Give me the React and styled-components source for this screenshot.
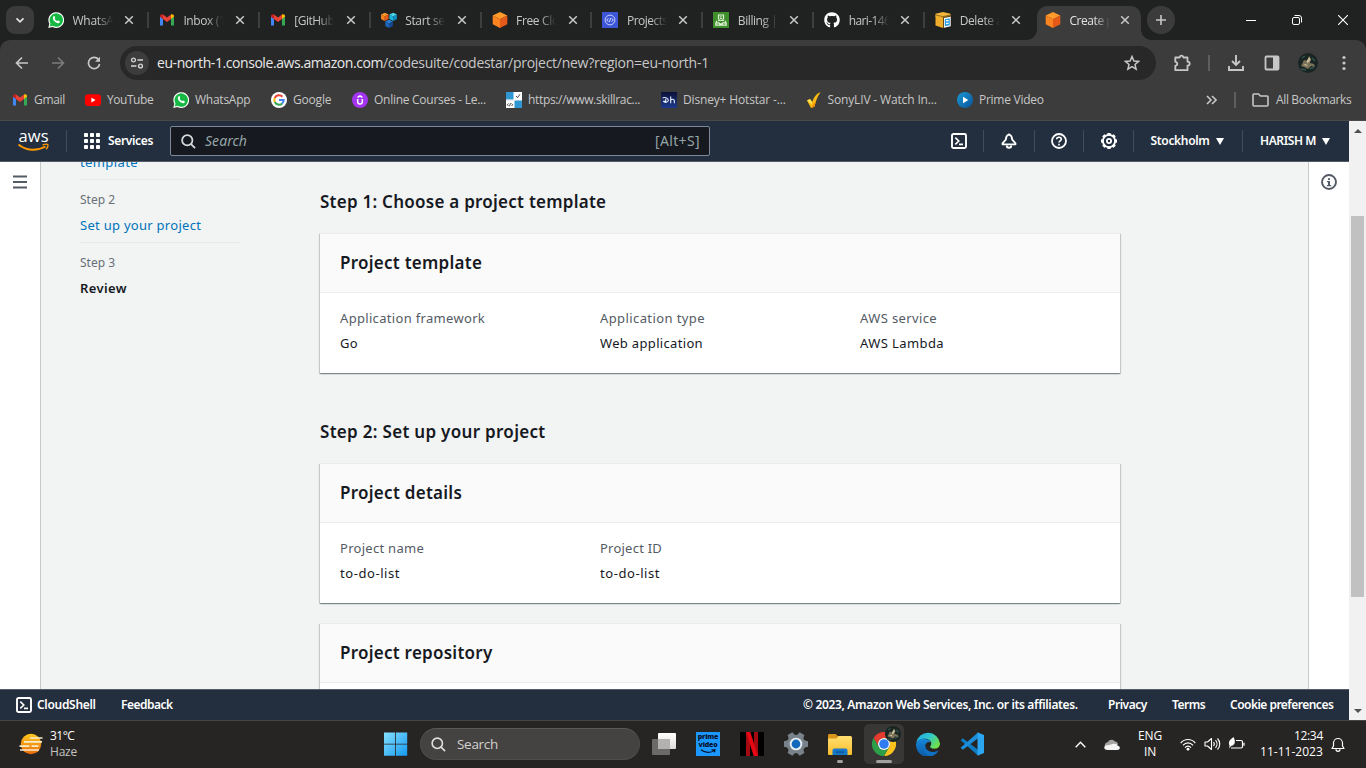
import React from "react";
import styled, { createGlobalStyle } from "styled-components";
import { FaGithub } from "react-icons/fa";

const Global = createGlobalStyle`
  * { box-sizing: border-box; }
  html, body, #root { margin: 0; padding: 0; height: 100%; }
  body { overflow: hidden; background: #202121; font-family: "Open Sans", "Noto Sans", sans-serif; }
  svg { display: block; flex: none; }
`;

const Text = styled.span`
  display: block;
  flex: none;
  width: ${(p) => (p.$w ? `${p.$w}px` : "auto")};
  line-height: ${(p) => p.$lh || 16}px;
  white-space: nowrap;
  font-size: ${(p) => p.$size || 12}px;
  font-weight: ${(p) => p.$weight || 400};
  font-style: ${(p) => (p.$italic ? "italic" : "normal")};
  letter-spacing: ${(p) => p.$ls || 0}px;
  color: ${(p) => p.$color || "inherit"};
`;
const AwsText = styled(Text)`
  font-family: "Noto Sans", "Open Sans", sans-serif;
`;
const AwsBold = styled(AwsText)`
  font-size: 12px;
  font-weight: 600;
`;

const Screen = styled.div`
  width: 1366px;
  height: 768px;
  display: flex;
  flex-direction: column;
  overflow: hidden;
`;

/* ---------- browser chrome ---------- */

const TabStrip = styled.div`
  height: 40px;
  flex: none;
  display: flex;
  align-items: flex-end;
  padding-left: 6px;
  background: #202121;
  color: #c7c7c7;
`;
const TabSearch = styled.div`
  width: 28px;
  height: 28px;
  margin: 0 4px 6px 0;
  border-radius: 9px;
  background: #3b3b3b;
  display: grid;
  place-items: center;
`;
const Tab = styled.div`
  position: relative;
  flex: none;
  width: ${(p) => (p.$active ? 104 : 110.9)}px;
  height: 34px;
  padding: 0 0 6px ${(p) => (p.$active ? 8 : 10)}px;
  margin-left: ${(p) => (p.$active ? 1 : 0)}px;
  display: flex;
  align-items: center;
  border-radius: 10px 10px 0 0;
  background: ${(p) => (p.$active ? "#3c3c3c" : "transparent")};
  color: ${(p) => (p.$active ? "#e3e3e3" : "#c7c7c7")};
  ${(p) =>
    p.$active &&
    `&::before, &::after {
      content: "";
      position: absolute;
      bottom: 0;
      width: 10px;
      height: 10px;
    }
    &::before { left: -10px; background: radial-gradient(circle at 0 0, transparent 9.5px, #3c3c3c 10px); }
    &::after { right: -10px; background: radial-gradient(circle at 100% 0, transparent 9.5px, #3c3c3c 10px); }`}
`;
const TabTitle = styled.div`
  width: 40px;
  margin: 2px ${(p) => (p.$active ? 9.5 : 10.5)}px 0 8.5px;
  mask-image: linear-gradient(90deg, #000 60%, transparent 100%);
`;
const TabRule = styled.i`
  width: 2px;
  height: 16px;
  margin-left: auto;
  background: #3d3e3e;
`;
const NewTab = styled.div`
  width: 28px;
  height: 28px;
  margin: 0 0 6px 6px;
  border-radius: 50%;
  background: #3b3b3b;
  display: grid;
  place-items: center;
`;
const WindowButtons = styled.div`
  margin-left: auto;
  height: 40px;
  display: flex;
`;
const WindowButton = styled.div`
  width: 46px;
  display: grid;
  place-items: center;
`;
const ToolbarBack = styled.div`
  flex: none;
  background: #202121;
`;
const Toolbar = styled.div`
  height: 46px;
  padding: 0 12px;
  display: flex;
  align-items: center;
  border-radius: 10px 10px 0 0;
  background: #3c3c3c;
  color: #c7c7c7;
`;
const NavButton = styled.div`
  width: 20px;
  height: 20px;
  margin-right: ${(p) => p.$gap || 0}px;
  display: grid;
  place-items: center;
`;
const AddressBar = styled.div`
  width: 1036px;
  height: 34px;
  margin-right: 16px;
  padding: 0 16px 0 5px;
  border-radius: 17px;
  background: #282828;
  display: flex;
  align-items: center;
`;
const SiteChip = styled.div`
  width: 24px;
  height: 24px;
  border-radius: 50%;
  background: #3c3c3c;
  display: grid;
  place-items: center;
  margin-right: 8px;
`;
const Push = styled.div`
  margin-left: auto;
`;
const Rule = styled.i`
  width: 2px;
  height: 16px;
  flex: none;
  margin-right: ${(p) => p.$gap}px;
  background: #5e5e5e;
`;
const Bookmarks = styled.div`
  height: 35px;
  flex: none;
  padding: 0 15px 6px 12px;
  display: flex;
  align-items: center;
  background: #3c3c3c;
  border-bottom: 1px solid #4a4a4a;
  color: #c7c7c7;
`;
const Bookmark = styled.div`
  display: flex;
  align-items: center;
  gap: 6px;
  margin-right: ${(p) => p.$gap}px;
`;
const BookmarksEnd = styled.div`
  margin-left: auto;
  display: flex;
  align-items: center;
`;

/* ---------- AWS console ---------- */

const Viewport = styled.div`
  height: 599px;
  flex: none;
  display: flex;
`;
const Console = styled.div`
  width: 1349px;
  display: flex;
  flex-direction: column;
`;
const AwsNav = styled.div`
  height: 41px;
  flex: none;
  display: flex;
  align-items: center;
  padding-left: 17px;
  background: #232f3e;
  border-bottom: 1px solid #545b64;
  color: #fff;
`;
const AwsRule = styled.i`
  width: 1px;
  height: 22px;
  flex: none;
  background: #414d5c;
`;
const Services = styled.div`
  display: flex;
  align-items: center;
  gap: 8px;
  margin: 0 17px;
`;
const Logo = styled.div`
  margin-right: 17px;
`;
const AwsSearch = styled.div`
  width: 540px;
  height: 30px;
  padding: 0 9px 0 10px;
  display: flex;
  align-items: center;
  gap: 9px;
  border: 1px solid #7d8998;
  border-radius: 2px;
  background: #16191f;
  color: #95a5a6;
`;
const NavCell = styled.div`
  width: ${(p) => p.$w}px;
  padding-right: ${(p) => p.$pr || 0}px;
  display: flex;
  align-items: center;
  justify-content: center;
  gap: 6px;
`;
const Body = styled.div`
  flex: 1;
  min-height: 0;
  display: flex;
  background: #f2f3f3;
  overflow: hidden;
`;
const Rail = styled.div`
  width: 41px;
  flex: none;
  background: #fff;
  padding: 12px 0 0 12px;
  margin-left: ${(p) => (p.$right ? "auto" : 0)};
  border-${(p) => (p.$right ? "left" : "right")}: 1px solid #c5cacb;
`;
const Steps = styled.div`
  width: 160px;
  margin: -10px 80px 0 39px;
`;
const Step = styled.div`
  padding: ${(p) => (p.$first ? 0 : 10)}px 0 7px;
  border-bottom: ${(p) => (p.$last ? "none" : "1px solid #e6e9e9")};
`;
const StepName = styled(AwsText)`
  margin-top: ${(p) => (p.$first ? 0 : 5)}px;
`;
const Main = styled.div`
  width: 800px;
  padding-top: 28px;
`;
const Heading = styled(AwsText)`
  margin-bottom: ${(p) => p.$mb || 0}px;
  font-size: 17px;
  font-weight: 600;
  line-height: 24px;
  color: #16191f;
`;
const Card = styled.section`
  margin-bottom: ${(p) => p.$gap || 0}px;
  background: #fff;
  border-top: 1px solid #eaeded;
  box-shadow: 0 1px 1px 0 rgba(0, 28, 36, 0.3), 1px 1px 1px 0 rgba(0, 28, 36, 0.15), -1px 1px 1px 0 rgba(0, 28, 36, 0.15);
`;
const CardHead = styled.header`
  height: 59px;
  padding: 17px 20px;
  background: #fafafa;
  border-bottom: 1px solid #eaeded;
`;
const CardBody = styled.div`
  height: 80px;
  padding: 15px 0 0 20px;
  display: flex;
`;
const FieldBox = styled.div`
  width: 260px;
  flex: none;
  display: flex;
  flex-direction: column;
  gap: 5px;
`;
const Footer = styled.footer`
  height: 31px;
  flex: none;
  padding: 0 16px;
  display: flex;
  align-items: center;
  background: #232f3e;
  border-top: 1px solid #545b64;
  color: #fff;
`;
const FooterGroup = styled.div`
  display: flex;
  align-items: center;
  gap: ${(p) => p.$gap}px;
  margin-right: ${(p) => p.$mr || 0}px;
`;
const Scrollbar = styled.div`
  width: 17px;
  background: #f1f1f1;
  display: flex;
  flex-direction: column;
  align-items: center;
  padding: 8px 0 7px;
`;
const Thumb = styled.div`
  width: 13px;
  height: 381px;
  margin: 83px 0 auto;
  background: #c1c1c1;
`;

/* ---------- taskbar ---------- */

const Taskbar = styled.div`
  height: 48px;
  flex: none;
  display: flex;
  align-items: center;
  padding-bottom: 1px;
  background: #272523;
  border-top: 1px solid #484644;
  color: #fff;
`;
const Weather = styled.div`
  width: 374px;
  padding-left: 19px;
  display: flex;
  align-items: center;
  gap: 7px;
`;
const Stack = styled.div`
  display: flex;
  flex-direction: column;
  align-items: ${(p) => p.$align || "flex-start"};
  margin-right: ${(p) => p.$mr || 0}px;
`;
const TaskSearch = styled.div`
  width: 220px;
  height: 32px;
  margin: 0 2px;
  padding-left: 10px;
  display: flex;
  align-items: center;
  gap: 11px;
  border-radius: 16px;
  border: 1px solid #4e4c4b;
  border-top-color: #5a5857;
  background: #454341;
  color: #d2d1d0;
`;
const AppSlot = styled.div`
  position: relative;
  width: 40px;
  height: 40px;
  margin: 0 2px;
  border-radius: 5px;
  display: grid;
  place-items: center;
  background: ${(p) => (p.$active ? "#393735" : "transparent")};
  ${(p) =>
    p.$bar &&
    `&::after {
      content: "";
      position: absolute;
      left: ${20 - p.$bar / 2}px;
      bottom: 1px;
      width: ${p.$bar}px;
      height: 3px;
      border-radius: 2px;
      background: #a3a2a1;
    }`}
`;
const Badge = styled.div`
  position: absolute;
  left: 21px;
  top: 2px;
`;
const PrimeTile = styled.div`
  width: 24px;
  height: 24px;
  display: flex;
  flex-direction: column;
  align-items: center;
  padding-top: 1px;
  background: #1a98ff;
  color: #06122b;
  font-family: "Open Sans", sans-serif;
  font-size: 7px;
  font-weight: 800;
  line-height: 8px;
  letter-spacing: -0.2px;
`;
const Tray = styled.div`
  margin-left: auto;
  padding-right: 21px;
  display: flex;
  align-items: center;
`;
const TrayIcon = styled.div`
  margin-right: ${(p) => p.$mr || 0}px;
`;

/* ---------- icons ---------- */

const Svg = ({ s = 16, h, vb, children }) => (
  <svg width={s} height={h || s} viewBox={vb || `0 0 ${s} ${h || s}`} fill="none">
    {children}
  </svg>
);
const Gmail = () => (
  <Svg>
    <path d="M1 13.500h3V6.800L1 4.500z" fill="#4285f4" />
    <path d="M12 13.500h3v-9l-3 2.300z" fill="#34a853" />
    <path d="M4 2.600 8 5.600l4-3v4.500L8 10 4 7.100z" fill="#ea4335" />
    <path d="M4 2.600v4.500L1 4.800v-.6C1 2.500 2.800 1.800 4 2.600z" fill="#c5221f" />
    <path d="M12 2.600v4.500l3-2.300v-.6c0-1.700-1.800-2.400-3-1.600z" fill="#fbbc04" />
  </Svg>
);
const WhatsApp = () => (
  <Svg>
    <path d="M0.300 16 1.300 11.800A7.900 7.900 0 1 1 4.500 15z" fill="#fff" />
    <path d="M1.700 14.600 2.500 11.500A6.700 6.700 0 1 1 4.800 13.800z" fill="#15b843" />
    <path d="M5.600 4.200c.5-.3.9-.2 1.100.3l.5 1.200c.1.400-.6.800-.5 1.100.5 1.100 1.300 1.800 2.400 2.300.4.200.8-.8 1.100-.6l1.400.7c.5.300.1 1.500-.6 1.800-1.300.6-3.300-.4-4.600-1.700C5 8 4.200 5.500 5.600 4.200z" fill="#fff" />
  </Svg>
);
const Cube = ({ x = 0, y = 0, k = 1, c }) => (
  <g transform={`translate(${x} ${y}) scale(${k})`}>
    <path d="M8 0 15.300 3.500 8 7.200.7 3.500z" fill={c[0]} />
    <path d="M.7 3.500 8 7.200V16L.7 12.200z" fill={c[1]} />
    <path d="M15.300 3.500 8 7.200V16l7.300-3.800z" fill={c[2]} />
  </g>
);
const orange = ["#ff9a2b", "#fb8320", "#e55a18"];
const AwsCube = () => <Svg><Cube c={orange} /></Svg>;
const Cubes = () => (
  <Svg>
    <Cube k={0.52} y={0.7} x={-0.4} c={orange} />
    <Cube k={0.52} y={0.7} x={8} c={["#4dd8e8", "#21b5d8", "#0d8fc0"]} />
    <Cube k={0.52} y={7.7} x={3.9} c={["#2d7fd6", "#1c64b8", "#134a94"]} />
  </Svg>
);
const CodeStar = () => (
  <Svg>
    <rect width="16" height="16" fill="#3d55d8" />
    <circle cx="8" cy="8" r="4.900" stroke="#c9d2ff" strokeWidth="1" />
    <path d="M6.300 6.300 4.800 8l1.500 1.700M9.700 6.300 11.200 8 9.700 9.700M8.600 6 7.400 10" stroke="#e4e9ff" strokeWidth=".9" />
  </Svg>
);
const Billing = () => (
  <Svg>
    <rect width="16" height="16" fill="#3f8f2c" />
    <path d="M5.500 7.500V3h5v4.500M7.200 5.300 8.500 4.500M5 8.500h2M9 8.500h2M3.500 8.800v2h2.500l.8 1h2.400l.8-1h2.500v-2M2.800 10.500v2.700h10.400v-2.700" stroke="#e2f3d8" strokeWidth="1.200" />
    <circle cx="8" cy="7.500" r="1.200" stroke="#e2f3d8" strokeWidth=".9" />
  </Svg>
);
const Bucket = () => (
  <Svg>
    <path d="M8 0 15.500 1.800v3L8 6.500.5 4.800v-3z" fill="#f3b73e" />
    <path d="M.5 3.300 8 5V16L.5 13.500z" fill="#f0ac2c" />
    <path d="M.5 2.900 8 4.600l7.500-1.700" stroke="#6b4a12" strokeWidth=".7" />
    <path d="M15.500 3.300 8 5V16l7.500-2.500z" fill="#6b4a12" />
    <path d="M9 6 15.700 4.700v9.600L9 15.700z" fill="#fff" />
    <path d="M9.800 7.200l5-.9v7l-5 1z" fill="#2c9de0" />
    <path d="M11 8.900l2.600-.5M11 11.600l2.600-.5" stroke="#fff" strokeWidth="1.200" />
  </Svg>
);
const Close = () => (
  <Svg s={12}><path d="M2.200 2.200l7.600 7.600M9.800 2.200 2.200 9.800" stroke="#c9c9c9" strokeWidth="1.500" /></Svg>
);
const YouTube = () => (
  <Svg>
    <rect x="0" y="2.300" width="16" height="11.600" rx="3" fill="#f00" />
    <path d="M6.400 5.700v4.800L10.600 8.100z" fill="#fff" />
  </Svg>
);
const Google = () => (
  <Svg>
    <circle cx="8" cy="8" r="8" fill="#fff" />
    <path d="M3.700 6.100A4.700 4.700 0 0 1 11.400 4.700" stroke="#ea4335" strokeWidth="2" />
    <path d="M3.800 10A4.700 4.700 0 0 1 3.800 6" stroke="#fbbc05" strokeWidth="2" />
    <path d="M11.200 11.400A4.700 4.700 0 0 1 3.800 10" stroke="#34a853" strokeWidth="2" />
    <path d="M8 8h4.700A4.700 4.700 0 0 1 11.100 11.500" stroke="#4285f4" strokeWidth="2" />
  </Svg>
);
const Udemy = () => (
  <Svg>
    <circle cx="8" cy="8" r="8" fill="#a435f0" />
    <path d="M5.700 7v2.700c0 3 4.600 3 4.600 0V7M5.600 5.300 8 3.800l2.400 1.500" stroke="#fff" strokeWidth="1.500" />
  </Svg>
);
const Skill = () => (
  <Svg>
    <rect width="16" height="16" fill="#fff" />
    <path d="M0 0h7.500v7.500H0zM8.500 8.500H16V16H8.500z" fill="#2f97d1" />
    <path d="M0 7.800h7.500v.7H0z" fill="#d5d5d5" />
    <path d="M10 4l1.500 1.700L14 2.200M2.500 11.500 1.300 12.800l1.200 1.200M5.500 11.500l1.200 1.300-1.200 1.200M4.500 11.200 3.500 14.200" stroke="#333" strokeWidth=".9" />
  </Svg>
);
const Hotstar = () => (
  <Svg>
    <defs><linearGradient id="hs" x1="0" y1="0" x2="0" y2="1"><stop stopColor="#0b1038" /><stop offset="1" stopColor="#1d3b8e" /></linearGradient></defs>
    <rect width="16" height="16" fill="url(#hs)" />
    <path d="M1.500 6C4.500 4.800 7.300 6.200 7.300 8.300S3.500 11 2.500 9.300h2M4.700 7v4M9.700 4.500v6.800M9.700 8.800c.2-2 3.600-2 3.600 0v2.500" stroke="#e8f1ff" strokeWidth="1.100" />
  </Svg>
);
const Sony = () => (
  <Svg>
    <path d="M1 8.500 4 7l2.200 3C8 5 10.500 1.500 14.500.3c-3 4.200-4.800 9-6 14.500L5 16z" fill="#fdb913" />
    <path d="M1 8.500 4 7l2.200 3-.6 2.500z" fill="#ffe14a" />
    <path d="M5 16l3.500-1.200L10 9z" fill="#f08a00" />
  </Svg>
);
const Prime = () => (
  <Svg>
    <defs><linearGradient id="pv" x1="0" y1="0" x2="1" y2="1"><stop stopColor="#1a9bd8" /><stop offset="1" stopColor="#0b5296" /></linearGradient></defs>
    <circle cx="8" cy="8" r="8" fill="url(#pv)" />
    <path d="M6 4.800v6.400L11.300 8z" fill="#fff" />
  </Svg>
);
const Avatar = ({ s }) => (
  <Svg s={s} vb="0 0 20 20">
    <circle cx="10" cy="10" r="10" fill="#182523" />
    <path d="M3 13 6 7l3 1 2-5 2 3-1 4 4 1 1 3-4-1-3 3-4-2z" fill="#7a7258" />
    <path d="M8.500 8l3-4 1 3-3 3.500zM5 12l3-1 2 2M12 11l3 1" fill="#c9be9b" />
    <path d="M4 5l3-2M14 5l3 3M3 16l5 1M12 16l4-2" stroke="#35524a" strokeWidth="1.500" />
  </Svg>
);
const Shell = () => (
  <Svg>
    <rect x="1" y="1" width="14" height="14" rx="1.500" stroke="#fff" strokeWidth="1.900" />
    <path d="M4.300 4.600 7.800 8l-3.500 3.400M8 11.400h4" stroke="#fff" strokeWidth="1.600" />
  </Svg>
);
const Caret = () => <Svg s={8} h={7}><path d="M0 0h8L4 7z" fill="#fff" /></Svg>;
const Magnifier = ({ s, color, w }) => (
  <Svg s={s} vb="0 0 16 16">
    <circle cx="6.700" cy="6.700" r="5.500" stroke={color} strokeWidth={w} />
    <path d="M10.500 10.500 15 15" stroke={color} strokeWidth={w} />
  </Svg>
);
const AwsLogo = () => (
  <Svg s={32} h={22}>
    <text x="1.500" y="12" fontFamily="Open Sans" fontWeight="500" fontSize="16.500" textLength="30" lengthAdjust="spacing" fill="#fff">aws</text>
    <path d="M1.500 14.500C9 21 20 21.300 28.500 16.500" stroke="#ff9900" strokeWidth="1.900" />
    <path d="M25.500 15.200c2-.9 4.800-1.200 5.300-.5s-.3 3.300-1.800 4.600" stroke="#ff9900" strokeWidth="1.400" />
  </Svg>
);
const Grid = () => (
  <Svg>
    {[0, 6, 12].map((y) => [0, 6, 12].map((x) => <rect key={`${x}-${y}`} x={x} y={y} width="4" height="4" rx=".8" fill="#fff" />))}
  </Svg>
);
const AwsBell = () => (
  <Svg>
    <path d="M8 1.300c2 .9 3.100 2.700 3.200 5.400l3.300 3.700v.9h-13v-.9l3.300-3.700C4.900 4 6 2.200 8 1.300z" stroke="#fff" strokeWidth="1.800" strokeLinejoin="round" />
    <path d="M5.800 12.500a2.200 2.200 0 0 0 4.400 0" stroke="#fff" strokeWidth="2" />
  </Svg>
);
const Help = () => (
  <Svg>
    <circle cx="8" cy="8" r="7" stroke="#fff" strokeWidth="1.800" />
    <path d="M5.700 6.300C5.700 3.500 10.300 3.600 10.300 6.200 10.300 7.900 8 7.900 8 9.600M8 10.800v1.700" stroke="#fff" strokeWidth="1.600" />
  </Svg>
);
const AwsGear = () => (
  <Svg>
    <circle cx="8" cy="8" r="6.100" stroke="#fff" strokeWidth="1.800" />
    {[0, 45, 90, 135, 180, 225, 270, 315].map((a) => <rect key={a} x="6.300" y="0" width="3.400" height="2.600" rx=".6" fill="#fff" transform={`rotate(${a} 8 8)`} />)}
    <circle cx="8" cy="8" r="2.100" stroke="#fff" strokeWidth="1.800" />
  </Svg>
);
const InfoIcon = () => (
  <Svg>
    <circle cx="8" cy="8" r="7" stroke="#545b64" strokeWidth="1.900" />
    <path d="M7 4.200h2v1.700H7zM6 7h3v4h1.200v1.300H5.900V11H7V8.300H6z" fill="#545b64" />
  </Svg>
);

const WeatherIcon = () => (
  <Svg s={24} h={22}>
    <defs><linearGradient id="sun" x1="0" y1="0" x2="0" y2="1"><stop stopColor="#ffc81e" /><stop offset="1" stopColor="#ec6a0c" /></linearGradient></defs>
    <circle cx="12" cy="11" r="10.200" fill="url(#sun)" />
    <path d="M11 5h12.500M5 8.800h18M.5 13.200h10M12.500 13.200h7M1 17h19" stroke="#f7eccb" strokeWidth="1.700" />
  </Svg>
);
const Start = () => (
  <Svg s={24}>
    <defs><linearGradient id="win" x1="0" y1="0" x2="1" y2="1"><stop stopColor="#86e0ff" /><stop offset="1" stopColor="#1499ef" /></linearGradient></defs>
    <path d="M0 .5h11.200v11.200H0zM12 .5h11.200v11.200H12zM0 12.500h11.200v11.200H0zM12 12.500h11.200v11.200H12z" fill="url(#win)" />
  </Svg>
);
const TaskView = () => (
  <Svg s={24}>
    <defs><linearGradient id="tv" x1="0" y1="0" x2="0" y2="1"><stop stopColor="#fff" /><stop offset="1" stopColor="#dcdcdc" /></linearGradient></defs>
    <rect x="0" y="7" width="18" height="16" rx="1" fill="#6b6a69" />
    <rect x="6" y="1" width="18" height="16" rx="1" fill="url(#tv)" />
    <rect x="6" y="7" width="12" height="10" fill="#b3b2b1" />
  </Svg>
);
const Netflix = () => (
  <Svg s={24}>
    <rect width="24" height="24" fill="#000" />
    <path d="M6 0h4v24l-4 .1zM14 0h4v24h-4z" fill="#a30a12" />
    <path d="M6 0h4.300L18 24h-4.300z" fill="#e50914" />
  </Svg>
);
const SettingsIcon = () => (
  <Svg s={24}>
    <circle cx="12" cy="12" r="9.300" fill="#79828a" />
    {[30, 90, 150, 210, 270, 330].map((a) => <path key={a} d="M8.300 4 9.300 0h5.400l1 4z" fill="#79828a" transform={`rotate(${a} 12 12)`} />)}
    <circle cx="12" cy="12" r="6.300" fill="#e9eef2" />
    <circle cx="12" cy="12" r="4.400" fill="#1268bb" />
  </Svg>
);
const Explorer = () => (
  <Svg s={24}>
    <defs><linearGradient id="ex" x1="0" y1="0" x2="0" y2="1"><stop stopColor="#ffdf70" /><stop offset="1" stopColor="#f9bd2c" /></linearGradient></defs>
    <path d="M0 3.500C0 2.500.6 2 1.500 2h6l3 2.500H22V9H0z" fill="#d9941a" />
    <path d="M0 6.500h8.500L10.500 4H22.500Q24 4 24 5.500V22q0 1-1 1H1q-1 0-1-1z" fill="url(#ex)" />
    <path d="M4.500 23v-4.500q0-2 2-2h11q2 0 2 2V23z" fill="#1478c8" />
    <path d="M8 19.500h8v1.200H8z" fill="#0b4f8c" />
  </Svg>
);
const Chrome = () => (
  <Svg s={24}>
    <path d="M1.600 6A12 12 0 0 1 22.400 6H12A6 6 0 0 0 6.800 15z" fill="#e33b2e" />
    <path d="M22.400 6A12 12 0 0 1 12 24L17.200 15A6 6 0 0 0 12 6z" fill="#fcc31e" />
    <path d="M12 24A12 12 0 0 1 1.600 6L6.800 15A6 6 0 0 0 17.200 15z" fill="#2c9f48" />
    <circle cx="12" cy="12" r="6" fill="#fff" />
    <circle cx="12" cy="12" r="4.800" fill="#2f7cf0" />
  </Svg>
);
const Edge = () => (
  <Svg s={24}>
    <defs>
      <linearGradient id="e1" x1="0" y1="0" x2="1" y2=".6"><stop stopColor="#1fa6e0" /><stop offset=".5" stopColor="#2fc6d0" /><stop offset="1" stopColor="#6fe04a" /></linearGradient>
      <linearGradient id="e2" x1="0" y1="0" x2="0" y2="1"><stop stopColor="#1489dc" /><stop offset="1" stopColor="#0c59a4" /></linearGradient>
    </defs>
    <path d="M.2 11A12 12 0 0 1 24 11.500c0 3.500-2.800 5.200-5.600 5.200-2.600 0-4.200-1.100-4.200-2 0-.8 1.100-1.200 1.100-3.100C15.300 8.500 12 6.800 8.800 6.800 4.500 6.800 1 9 .2 11z" fill="url(#e1)" />
    <path d="M.1 11.500C.8 8 4.500 6.500 8 6.700c3.500.2 6 1.800 6.800 3.500-1.500-.8-5.600-.2-5.600 3.800 0 4.600 4.800 7 9.300 6 1.800-.4 3.400-1.300 4-1.200A12 12 0 0 1 .1 11.500z" fill="url(#e2)" />
    <path d="M8.900 12.500C6 16 8 22.500 13.800 24a12 12 0 0 0 8.600-5.200c-5 2.700-12.600.7-13.200-4.600z" fill="#1170c2" />
  </Svg>
);
const VsCode = () => (
  <Svg s={24}>
    <path d="M.6 8.200 2.800 6.300 18 17.800V23.500z" fill="#0f7cc4" />
    <path d="M.6 15.800 2.800 17.700 18 6.200V.5z" fill="#1b8fdb" />
    <path d="M17.500.3 24 3v18l-6.500 2.700z" fill="#2aa6f2" />
  </Svg>
);

/* ---------- data ---------- */

const GitHub = () => <FaGithub size={16} color="#fff" />;
const tabs = [
  [WhatsApp, "WhatsA", -0.25],
  [Gmail, "Inbox (1", -0.4],
  [Gmail, "[GitHub", -0.5],
  [Cubes, "Start sel", -0.35],
  [AwsCube, "Free Clo", -0.35],
  [CodeStar, "Projects", -0.5],
  [Billing, "Billing |", -0.42],
  [GitHub, "hari-146", -0.6],
  [Bucket, "Delete a", -0.35],
];
const bookmarks = [
  [Gmail, "Gmail", 31, -0.3, 20],
  [YouTube, "YouTube", 46, -0.45, 20],
  [WhatsApp, "WhatsApp", 56, -0.25, 20],
  [Google, "Google", 39, -0.2, 20],
  [Udemy, "Online Courses - Le...", 112, -0.27, 20],
  [Skill, "https://www.skillrac...", 112, -0.34, 21],
  [Hotstar, "Disney+ Hotstar -...", 103, -0.16, 19.5],
  [Sony, "SonyLIV - Watch In...", 110, -0.15, 19.5],
  [Prime, "Prime Video", 65, -0.26, 0],
];

const Field = ({ label, value, l, v }) => (
  <FieldBox>
    <AwsText $lh={20} $size={13} $ls={l} $color="#545b64">{label}</AwsText>
    <AwsText $lh={20} $size={13} $ls={v} $color="#16191f">{value}</AwsText>
  </FieldBox>
);

export default function App() {
  return (
    <>
      <Global />
      <Screen>
        <TabStrip>
          <TabSearch><Svg s={10}><path d="M1.500 3.300 5 6.800l3.500-3.500" stroke="#e3e3e3" strokeWidth="1.700" /></Svg></TabSearch>
          {tabs.map(([Icon, title, ls], i) => (
            <Tab key={title}>
              <Icon />
              <TabTitle><Text $ls={ls}>{title}</Text></TabTitle>
              <Close />
              {i < tabs.length - 1 && <TabRule />}
            </Tab>
          ))}
          <Tab $active>
            <AwsCube />
            <TabTitle $active><Text $ls={-0.45}>Create p</Text></TabTitle>
            <Close />
          </Tab>
          <NewTab><Svg s={12}><path d="M6 1v10M1 6h10" stroke="#c7c7c7" strokeWidth="1.600" /></Svg></NewTab>
          <WindowButtons>
            <WindowButton><Svg s={10}><path d="M0 5.500h10" stroke="#fff" /></Svg></WindowButton>
            <WindowButton><Svg s={10}><rect x=".5" y="2.500" width="7" height="7" rx="1.500" stroke="#fff" /><path d="M2.500.5H7A2.500 2.500 0 0 1 9.500 3v4.500" stroke="#fff" /></Svg></WindowButton>
            <WindowButton><Svg s={10}><path d="M0 0l10 10M10 0 0 10" stroke="#fff" strokeWidth="1.100" /></Svg></WindowButton>
          </WindowButtons>
        </TabStrip>

        <ToolbarBack>
          <Toolbar>
            <NavButton $gap={16}><Svg s={14}><path d="M13 7H2M7 1.500 1.500 7 7 12.500" stroke="#c7c7c7" strokeWidth="1.700" /></Svg></NavButton>
            <NavButton $gap={16}><Svg s={14}><path d="M1 7h11M7 1.500 12.500 7 7 12.500" stroke="#7c7c7c" strokeWidth="1.600" /></Svg></NavButton>
            <NavButton $gap={16}><Svg s={14}><path d="M11.800 4A5.600 5.600 0 1 0 12.600 8" stroke="#c7c7c7" strokeWidth="1.700" /><path d="M13 .8v5H8z" fill="#c7c7c7" /></Svg></NavButton>
            <AddressBar>
              <SiteChip>
                <Svg s={14} h={12}>
                  <circle cx="3.500" cy="3" r="1.900" stroke="#d6d6d6" strokeWidth="1.400" />
                  <path d="M7.500 3H13M1 9h5.500" stroke="#d6d6d6" strokeWidth="1.500" />
                  <circle cx="10.500" cy="9" r="1.900" stroke="#d6d6d6" strokeWidth="1.400" />
                </Svg>
              </SiteChip>
              <Text $w={226} $size={14} $ls={-0.43} $color="#e8e8e8">eu-north-1.console.aws.amazon.com</Text>
              <Text $w={326} $size={14} $ls={-0.27}>/codesuite/codestar/project/new?region=eu-north-1</Text>
              <Push>
                <Svg><path d="M8 1.500 9.900 6l4.700.4-3.600 3.100 1.100 4.700L8 11.700l-4.100 2.500L5 9.500 1.400 6.400 6.100 6z" stroke="#c7c7c7" strokeWidth="1.500" /></Svg>
              </Push>
            </AddressBar>
            <NavButton $gap={16}><Svg s={18}><path d="M2.300 3.500h4.400c.2-2.500 3.400-2.500 3.600 0h4.200v4.200c2.900.3 2.900 3.600 0 3.900v4.600H2.300v-4.400c2.700-.4 2.700-3.600 0-4z" stroke="#c7c7c7" strokeWidth="1.800" strokeLinejoin="round" /></Svg></NavButton>
            <Rule $gap={16} />
            <NavButton $gap={16}><Svg><path d="M8 0v10M4 6l4 4 4-4M1 11v4h14v-4" stroke="#c7c7c7" strokeWidth="1.900" /></Svg></NavButton>
            <NavButton $gap={16}><Svg><rect x="1.500" y="1.500" width="13" height="13" rx="1" stroke="#c7c7c7" strokeWidth="1.800" /><path d="M9 1h5v14H9z" fill="#c7c7c7" /></Svg></NavButton>
            <NavButton $gap={16}><Avatar s={20} /></NavButton>
            <NavButton><Svg s={4} h={16}><circle cx="2" cy="2.500" r="1.600" fill="#c7c7c7" /><circle cx="2" cy="8" r="1.600" fill="#c7c7c7" /><circle cx="2" cy="13.500" r="1.600" fill="#c7c7c7" /></Svg></NavButton>
          </Toolbar>
        </ToolbarBack>

        <Bookmarks>
          {bookmarks.map(([Icon, name, w, ls, gap]) => (
            <Bookmark key={name} $gap={gap}>
              <Icon />
              <Text $w={w} $ls={ls}>{name}</Text>
            </Bookmark>
          ))}
          <BookmarksEnd>
            <Bookmark $gap={17}><Svg s={11} h={10}><path d="M1 1l4 4-4 4M6 1l4 4-4 4" stroke="#c7c7c7" strokeWidth="1.600" /></Svg></Bookmark>
            <Rule $gap={16} />
            <Bookmark $gap={7}><Svg s={17} h={14}><path d="M1 2q0-1 1-1h4.500l2 2H15q1 0 1 1v8q0 1-1 1H2q-1 0-1-1z" stroke="#c7c7c7" strokeWidth="1.600" /></Svg></Bookmark>
            <Text $w={75} $ls={-0.36}>All Bookmarks</Text>
          </BookmarksEnd>
        </Bookmarks>

        <Viewport>
          <Console>
            <AwsNav>
              <Logo><AwsLogo /></Logo>
              <AwsRule />
              <Services>
                <Grid />
                <AwsBold $w={45} $ls={-0.34}>Services</AwsBold>
              </Services>
              <AwsSearch>
                <Magnifier s={15} color="#d5dbdb" w={1.9} />
                <AwsText $size={14} $italic $ls={0.04}>Search</AwsText>
                <Push><AwsText $w={45} $size={14} $ls={0.35}>[Alt+S]</AwsText></Push>
              </AwsSearch>
              <Push />
              <NavCell $w={48}><Shell /></NavCell>
              <AwsRule />
              <NavCell $w={50}><AwsBell /></NavCell>
              <AwsRule />
              <NavCell $w={48}><Help /></NavCell>
              <AwsRule />
              <NavCell $w={49}><AwsGear /></NavCell>
              <AwsRule />
              <NavCell $w={108} $pr={2}><AwsBold $w={59} $ls={-0.33}>Stockholm</AwsBold><Caret /></NavCell>
              <AwsRule />
              <NavCell $w={106} $pr={2}><AwsBold $w={56} $ls={-0.4}>HARISH M</AwsBold><Caret /></NavCell>
            </AwsNav>

            <Body>
              <Rail><Svg><path d="M1 2.500h14M1 8h14M1 13.500h14" stroke="#545b64" strokeWidth="2" /></Svg></Rail>
              <Steps>
                <Step $first><StepName $first $lh={20} $size={13} $ls={0.39} $color="#0073bb">template</StepName></Step>
                <Step>
                  <AwsText $lh={20} $size={12} $color="#687078">Step 2</AwsText>
                  <StepName $lh={20} $size={13} $ls={0.28} $color="#0073bb">Set up your project</StepName>
                </Step>
                <Step $last>
                  <AwsText $lh={20} $size={12} $color="#687078">Step 3</AwsText>
                  <StepName $lh={20} $size={13} $weight={600} $ls={0.36} $color="#16191f">Review</StepName>
                </Step>
              </Steps>
              <Main>
                <Heading $mb={19} $ls={0.25}>Step 1: Choose a project template</Heading>
                <Card $gap={47}>
                  <CardHead><Heading $ls={0.26}>Project template</Heading></CardHead>
                  <CardBody>
                    <Field label="Application framework" value="Go" l={0.32} v={0.34} />
                    <Field label="Application type" value="Web application" l={0.4} v={0.33} />
                    <Field label="AWS service" value="AWS Lambda" l={0.38} v={0.41} />
                  </CardBody>
                </Card>
                <Heading $mb={19} $ls={0.3}>Step 2: Set up your project</Heading>
                <Card $gap={20}>
                  <CardHead><Heading $ls={0.27}>Project details</Heading></CardHead>
                  <CardBody>
                    <Field label="Project name" value="to-do-list" l={0.28} v={0.56} />
                    <Field label="Project ID" value="to-do-list" l={0.23} v={0.56} />
                  </CardBody>
                </Card>
                <Card>
                  <CardHead><Heading $ls={0.25}>Project repository</Heading></CardHead>
                  <CardBody />
                </Card>
              </Main>
              <Rail $right><InfoIcon /></Rail>
            </Body>

            <Footer>
              <FooterGroup $gap={5} $mr={25}><Shell /><AwsBold $w={59} $ls={-0.3}>CloudShell</AwsBold></FooterGroup>
              <AwsBold $w={52} $ls={-0.5}>Feedback</AwsBold>
              <Push />
              <FooterGroup $gap={25}>
                <AwsBold $w={280} $ls={-0.34}>© 2023, Amazon Web Services, Inc. or its affiliates.</AwsBold>
                <AwsBold $w={39} $ls={-0.48}>Privacy</AwsBold>
                <AwsBold $w={33} $ls={-0.5}>Terms</AwsBold>
                <AwsBold $w={103} $ls={-0.52}>Cookie preferences</AwsBold>
              </FooterGroup>
            </Footer>
          </Console>
          <Scrollbar>
            <Svg s={8} h={4}><path d="M0 4 4 0l4 4z" fill="#505050" /></Svg>
            <Thumb />
            <Svg s={8} h={4}><path d="M0 0l4 4 4-4z" fill="#505050" /></Svg>
          </Scrollbar>
        </Viewport>

        <Taskbar>
          <Weather>
            <WeatherIcon />
            <Stack>
              <Text $w={25} $ls={-0.5}>31°C</Text>
              <Text $w={27} $ls={-0.2} $color="#c5c4c3">Haze</Text>
            </Stack>
          </Weather>
          <AppSlot><Start /></AppSlot>
          <TaskSearch>
            <Magnifier s={15} color="#e0dfde" w={1.7} />
            <Text $size={13.5} $ls={-0.29}>Search</Text>
          </TaskSearch>
          <AppSlot><TaskView /></AppSlot>
          <AppSlot>
            <PrimeTile>
              <span>prime</span>
              <span>video</span>
              <Svg s={18} h={5}><path d="M2 .8c4 3.400 10 3.400 13.500.6M12.500.8h3.500l-.6 2.600" stroke="#06122b" strokeWidth="1.200" /></Svg>
            </PrimeTile>
          </AppSlot>
          <AppSlot><Netflix /></AppSlot>
          <AppSlot><SettingsIcon /></AppSlot>
          <AppSlot $bar={6}><Explorer /></AppSlot>
          <AppSlot $active $bar={16}><Chrome /><Badge><Avatar s={16} /></Badge></AppSlot>
          <AppSlot><Edge /></AppSlot>
          <AppSlot><VsCode /></AppSlot>
          <Tray>
            <TrayIcon $mr={18}><Svg s={11} h={7}><path d="M.7 6.200 5.500 1.300l4.800 4.900" stroke="#fff" strokeWidth="1.400" /></Svg></TrayIcon>
            <TrayIcon $mr={18}>
              <Svg s={16} h={11}>
                <path d="M1 8C0 4 3 3 4 3.200 5 .5 9 0 11 2.500c2 .2 3 1.500 3 3L9 9z" fill="#a5a4a3" />
                <path d="M3.500 11C-1 11-.5 6.500 3 6.300 6 6.500 8 4.500 10.500 4.800c2 .1 2.500 1 2.800 1.600 3.500.4 3.500 4.600 0 4.600z" fill="#f4f4f4" />
              </Svg>
            </TrayIcon>
            <Stack $align="center" $mr={18}>
              <Text $w={24} $ls={-0.1}>ENG</Text>
              <Text $w={12}>IN</Text>
            </Stack>
            <TrayIcon $mr={8}>
              <Svg s={16} h={13}>
                <path d="M.7 5C4.800.3 11.200.3 15.300 5M2.900 7.300c3-3.300 7.200-3.300 10.200 0M5 9.600c1.800-2 4.200-2 6 0" stroke="#fff" strokeWidth="1.200" />
                <circle cx="8" cy="11.200" r="1.400" fill="#fff" />
              </Svg>
            </TrayIcon>
            <TrayIcon $mr={7}>
              <Svg s={17} h={14}>
                <path d="M1 5h2.500L7.500 1.500v11L3.500 9H1z" stroke="#fff" strokeWidth="1.100" strokeLinejoin="round" />
                <path d="M9.500 5c1 1.200 1 2.800 0 4M11.500 3.200c2 2.200 2 5.400 0 7.600M13.500 1.500c3 3.200 3 7.800 0 11" stroke="#fff" strokeWidth="1.100" />
              </Svg>
            </TrayIcon>
            <TrayIcon $mr={15}>
              <Svg s={17} h={14}>
                <path d="M8 3.500h5q1.500 0 1.500 1.500v4.500q0 1.500-1.500 1.500H3M16 5.800v3" stroke="#fff" strokeWidth="1.200" />
                <path d="M1.500 8.500C-.3 4.500 2.300 2.500 5.500 0 8 4 7 8.500 3 9L1.300 11.500z" fill="#fff" />
              </Svg>
            </TrayIcon>
            <Stack $align="flex-end" $mr={8}>
              <Text $w={29} $ls={-0.34}>12:34</Text>
              <Text $w={63} $ls={0.02}>11-11-2023</Text>
            </Stack>
            <Svg s={14} h={15}>
              <path d="M1 11.500 2.500 9V6a4.500 4.500 0 0 1 9 0v3l1.500 2.500z" stroke="#fff" strokeWidth="1.200" strokeLinejoin="round" />
              <path d="M5 12.300a2 2 0 0 0 4 0" stroke="#fff" strokeWidth="1.200" />
            </Svg>
          </Tray>
        </Taskbar>
      </Screen>
    </>
  );
}
